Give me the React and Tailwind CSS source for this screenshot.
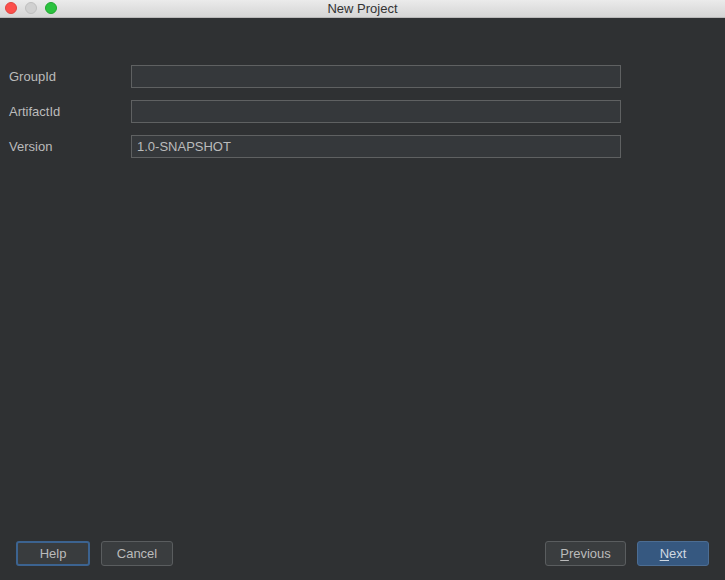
export default function App() {
  const font = { fontFamily: '"Liberation Sans", Arial, sans-serif' };
  return (
    <div className="w-[725px] h-[580px] flex flex-col bg-[#2f3133] overflow-hidden" style={font}>
      <div className="h-[18px] shrink-0 relative flex items-center justify-center bg-gradient-to-b from-[#ebebeb] to-[#d5d5d5] border-b border-[#b9b9b9]">
        <div className="absolute left-[5px] top-[2px] flex gap-[8px]">
          <div className="w-[12px] h-[12px] rounded-full bg-[#fc4f4b] border border-[#e0443e]"></div>
          <div className="w-[12px] h-[12px] rounded-full bg-[#d0d0d0] border border-[#bfbfbf]"></div>
          <div className="w-[12px] h-[12px] rounded-full bg-[#2bc23f] border border-[#1ea82f]"></div>
        </div>
        <span className="text-[13px] text-[#333333] leading-none">New Project</span>
      </div>
      <div className="flex-1 flex flex-col pt-[47px] gap-[12px]">
        {[
          ["GroupId", ""],
          ["ArtifactId", ""],
          ["Version", "1.0-SNAPSHOT"],
        ].map(([label, value]) => (
          <div key={label} className="flex items-center h-[23px]">
            <div className="w-[131px] pl-[9px] pt-[1px] text-[13px] text-[#bbbbbb]">{label}</div>
            <div className="w-[490px] h-[23px] bg-[#35383b] border border-[#5f6162] flex items-center pl-[5px] pt-[1px] text-[13px] text-[#bbbbbb]">
              {value}
            </div>
          </div>
        ))}
      </div>
      <div className="h-[50px] shrink-0 flex items-start pt-[11px] px-[16px]">
        <div className="flex gap-[11px]">
          <button className="w-[74px] h-[25px] rounded-[3px] border-2 border-[#3c6390] bg-[#393c3e] text-[13px] text-[#bbbbbb] flex items-center justify-center">Help</button>
          <button className="w-[72px] h-[25px] rounded-[3px] border border-[#5a5d5f] bg-[#3a3d3f] text-[13px] text-[#bbbbbb] flex items-center justify-center">Cancel</button>
        </div>
        <div className="ml-auto flex gap-[11px]">
          <button className="w-[81px] h-[25px] rounded-[3px] border border-[#5a5d5f] bg-[#3a3d3f] text-[13px] text-[#bbbbbb] flex items-center justify-center"><span className="underline underline-offset-2">P</span>revious</button>
          <button className="w-[72px] h-[25px] rounded-[3px] border border-[#4c6d93] bg-[#365880] text-[13px] text-[#d0d8e2] flex items-center justify-center"><span className="underline underline-offset-2">N</span>ext</button>
        </div>
      </div>
    </div>
  );
}
